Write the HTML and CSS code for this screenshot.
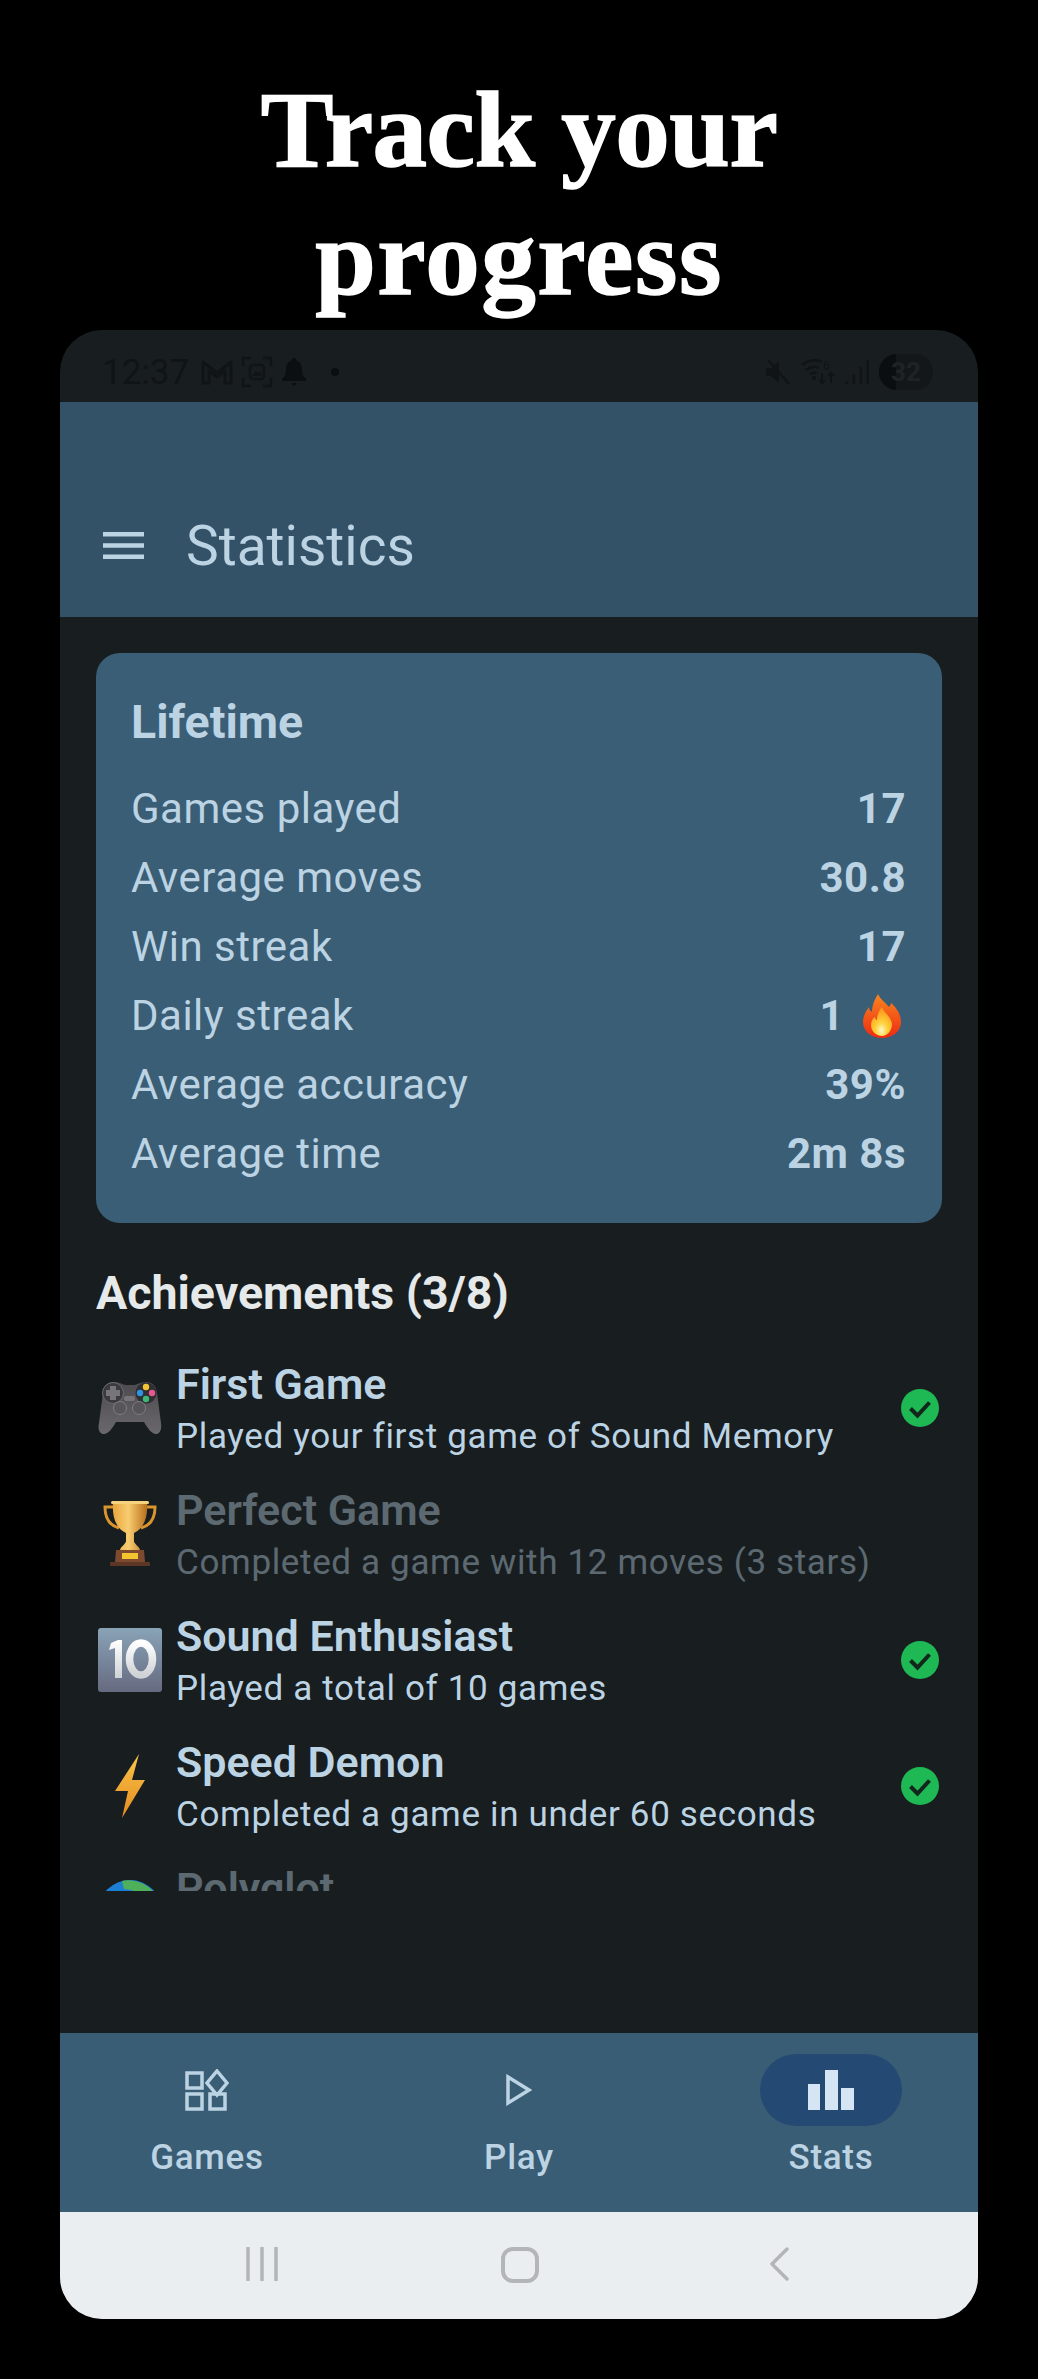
FILE: index.html
```html
<!DOCTYPE html>
<html lang="en">
<head>
  <meta charset="UTF-8">
  <meta name="viewport" content="width=device-width, initial-scale=1.0">
  <title>Track your progress</title>
  <link rel="stylesheet" href="styles.css">
</head>
<body>
  <h1 class="headline">Track your<br><span class="headline-second">progress</span></h1>

  <div class="phone">
    <div class="status-bar">
      <div class="status-left">
        <span class="clock">12:37</span>
        <svg class="status-icon" width="32" height="26" viewBox="0 0 32 26"><path d="M2 24V3l14 11L30 3v21h-6V12l-8 6-8-6v12z" fill="none" stroke="#101416" stroke-width="3" stroke-linejoin="round"/></svg>
        <svg class="status-icon" width="32" height="32" viewBox="0 0 32 32"><path d="M2 9V2h7M23 2h7v7M30 23v7h-7M9 30H2v-7" fill="none" stroke="#101416" stroke-width="2.5" stroke-linecap="round"/><rect x="9" y="9" width="14" height="14" rx="3" fill="none" stroke="#101416" stroke-width="2.5"/><path d="M11 20l4-5 2 2 2-2 2 5z" fill="#101416"/></svg>
        <svg class="status-icon" width="26" height="30" viewBox="0 0 26 30"><path d="M13 1c1.500 0 2.500 1 2.500 2.500C20 5 21 9 21 13c0 4 1 6 4 9v2H1v-2c3-3 4-5 4-9 0-4 1-8 5.500-9.500C10.500 2 11.500 1 13 1zM10 26h6l-3 3z" fill="#0b0f10"/></svg>
        <span class="status-dot"></span>
      </div>
      <div class="status-right">
        <svg width="26" height="26" viewBox="0 0 26 26"><path d="M1 9h5l8-7v22l-8-7H1z" fill="#101416"/><path d="M3 1l21 24" stroke="#101416" stroke-width="2.500"/></svg>
        <svg class="wifi" width="34" height="28" viewBox="0 0 34 28"><path d="M1 7c6-5 14-6 20-3M5 12c4-3 9-4 13-2M9 16c2-1 5-2 7-1" fill="none" stroke="#101416" stroke-width="2.500"/><circle cx="13" cy="20" r="2" fill="#101416"/><text x="22" y="12" class="wifi-six">6</text><path d="M21 15v10m-3-3l3 3 3-3M30 25V15m-3 3l3-3 3 3" fill="none" stroke="#101416" stroke-width="2"/></svg>
        <svg width="24" height="26" viewBox="0 0 24 26"><path d="M2 25v-3M9 25V15M16 25V8M23 25V1" stroke="#101416" stroke-width="2.500"/></svg>
        <div class="battery"><span class="battery-fill"></span><span class="battery-num">32</span></div>
      </div>
    </div>

    <header class="app-bar">
      <svg class="menu-icon" width="41" height="27" viewBox="0 0 41 27"><path d="M0 0h41v4.500H0zM0 11.250h41v4.500H0zM0 22.500h41V27H0z" fill="#bcd3e3"/></svg>
      <span class="app-title">Statistics</span>
    </header>

    <main class="content">
      <section class="card">
        <h2 class="card-title">Lifetime</h2>
        <div class="stat-row"><span>Games played</span><strong>17</strong></div>
        <div class="stat-row"><span>Average moves</span><strong>30.8</strong></div>
        <div class="stat-row"><span>Win streak</span><strong>17</strong></div>
        <div class="stat-row">
          <span>Daily streak</span>
          <strong class="streak">1
            <svg class="flame" width="40" height="44" viewBox="0 0 40 44">
              <defs>
                <linearGradient id="flameOuter" x1="0" y1="0" x2="0" y2="1"><stop offset="0" stop-color="#f9861e"/><stop offset="1" stop-color="#ee2a12"/></linearGradient>
                <radialGradient id="flameInner" cx="0.5" cy="0.8" r="0.7"><stop offset="0" stop-color="#fff7c8"/><stop offset="0.4" stop-color="#ffd23a"/><stop offset="1" stop-color="#fb9a1e"/></radialGradient>
              </defs>
              <path d="M16 0c2 5 7 8 11 13 1-1 2-3 2-4 6 5 10 12 10 19 0 9-8 16-19 16S1 37 1 28c0-6 3-11 6-15 0 2 1 4 3 5 0-7 3-13 6-18z" fill="url(#flameOuter)"/>
              <path d="M20 13c1 5 9 9 10 17 0 7-5 12-10 12S9 38 9 31c0-4 2-7 4-8 0 2 1 3 2 3 0-5 2-9 5-13z" fill="url(#flameInner)"/>
            </svg>
          </strong>
        </div>
        <div class="stat-row"><span>Average accuracy</span><strong>39%</strong></div>
        <div class="stat-row"><span>Average time</span><strong>2m 8s</strong></div>
      </section>

      <h2 class="section-title">Achievements (3/8)</h2>

      <div class="achievements">
        <div class="achievement">
          <div class="badge">
            <svg width="64" height="54" viewBox="0 0 64 54">
              <defs><linearGradient id="padBody" x1="0" y1="0" x2="0" y2="1"><stop offset="0" stop-color="#4b4a4e"/><stop offset="1" stop-color="#6b686c"/></linearGradient></defs>
              <path d="M16 1c6 0 9 3 12 3h8c3 0 6-3 12-3 7 0 10 4 11 11l4 30c1 8-2 11-5 11-4 0-8-5-12-12H18C14 48 10 53 6 53c-3 0-7-3-5-11l4-30C6 5 9 1 16 1z" fill="url(#padBody)"/>
              <circle cx="15" cy="12" r="10.500" fill="#3b3a3e" stroke="#6d6b70" stroke-width="1"/>
              <path d="M12 5h6v4h4v6h-4v4h-6v-4H8V9h4z" fill="#77757a"/>
              <circle cx="48" cy="12" r="10.500" fill="#2f2e32"/>
              <circle cx="48" cy="6" r="3.200" fill="#f6c432"/><circle cx="42" cy="12" r="3.200" fill="#2f93e0"/><circle cx="54" cy="12" r="3.200" fill="#e8578f"/><circle cx="48" cy="18" r="3.200" fill="#3cb878"/>
              <rect x="26" y="15" width="11" height="5" rx="2" fill="#77757a"/>
              <circle cx="22" cy="27" r="6.500" fill="#57555a" stroke="#7f7d82"/><circle cx="41" cy="27" r="6.500" fill="#57555a" stroke="#7f7d82"/>
            </svg>
          </div>
          <div class="achievement-text">
            <div class="achievement-name">First Game</div>
            <div class="achievement-desc">Played your first game of Sound Memory</div>
          </div>
          <svg class="check" width="38" height="38" viewBox="0 0 38 38"><circle cx="19" cy="19" r="19" fill="#1eb954"/><path d="M9.500 19.500l7 7 12-13" fill="none" stroke="#12261c" stroke-width="4"/></svg>
        </div>

        <div class="achievement locked">
          <div class="badge">
            <svg width="54" height="66" viewBox="0 0 54 66">
              <defs><linearGradient id="cupGold" x1="0" y1="0" x2="1" y2="0"><stop offset="0" stop-color="#e9a53c"/><stop offset="0.45" stop-color="#f8cd71"/><stop offset="1" stop-color="#b96f1b"/></linearGradient></defs>
              <path d="M12 6H2c0 10 3 18 14 21M42 6h10c0 10-3 18-14 21" fill="none" stroke="#d9942e" stroke-width="3"/>
              <path d="M10 1h34c1 14-2 26-13 31v8c0 3 5 5 6 9H17c1-4 6-6 6-9v-8C12 27 9 15 10 1z" fill="url(#cupGold)"/>
              <rect x="8" y="0" width="38" height="3" rx="1.500" fill="#f7d27d"/>
              <path d="M13 49h28l1 12H12z" fill="#7d4a30"/><rect x="19" y="52" width="16" height="6" fill="#f3c52f"/>
              <rect x="7" y="61" width="40" height="4" rx="1" fill="#5e3625"/>
            </svg>
          </div>
          <div class="achievement-text">
            <div class="achievement-name">Perfect Game</div>
            <div class="achievement-desc">Completed a game with 12 moves (3 stars)</div>
          </div>
        </div>

        <div class="achievement">
          <div class="badge">
            <svg width="64" height="64" viewBox="0 0 64 64">
              <defs>
                <linearGradient id="keycap" x1="0" y1="0" x2="0" y2="1"><stop offset="0" stop-color="#89a3b7"/><stop offset="1" stop-color="#666a80"/></linearGradient>
                <linearGradient id="keyNum" x1="0" y1="0" x2="0" y2="1"><stop offset="0" stop-color="#ffffff"/><stop offset="1" stop-color="#cfd2d6"/></linearGradient>
              </defs>
              <rect width="64" height="64" rx="3" fill="url(#keycap)"/>
              <path d="M13 15l7-3h4v38h-7V20l-6 2z" fill="url(#keyNum)"/>
              <ellipse cx="43" cy="31" rx="11.500" ry="16" fill="none" stroke="url(#keyNum)" stroke-width="7.500"/>
            </svg>
          </div>
          <div class="achievement-text">
            <div class="achievement-name">Sound Enthusiast</div>
            <div class="achievement-desc">Played a total of 10 games</div>
          </div>
          <svg class="check" width="38" height="38" viewBox="0 0 38 38"><circle cx="19" cy="19" r="19" fill="#1eb954"/><path d="M9.500 19.500l7 7 12-13" fill="none" stroke="#12261c" stroke-width="4"/></svg>
        </div>

        <div class="achievement">
          <div class="badge">
            <svg width="30" height="64" viewBox="0 0 30 64">
              <defs><linearGradient id="bolt" x1="0" y1="0" x2="0" y2="1"><stop offset="0" stop-color="#f9c64b"/><stop offset="1" stop-color="#e58a1f"/></linearGradient></defs>
              <path d="M24 0L17 26h13L7 64l6-27H0z" fill="url(#bolt)"/>
            </svg>
          </div>
          <div class="achievement-text">
            <div class="achievement-name">Speed Demon</div>
            <div class="achievement-desc">Completed a game in under 60 seconds</div>
          </div>
          <svg class="check" width="38" height="38" viewBox="0 0 38 38"><circle cx="19" cy="19" r="19" fill="#1eb954"/><path d="M9.500 19.500l7 7 12-13" fill="none" stroke="#12261c" stroke-width="4"/></svg>
        </div>

        <div class="achievement locked">
          <div class="badge">
            <svg width="64" height="64" viewBox="0 0 64 64">
              <circle cx="32" cy="32" r="32" fill="#1c7fd6"/>
              <path d="M24 1c8-2 20 0 30 9l2 6-12-3-6 1-4-4-8-1z" fill="#4fb05a"/>
            </svg>
          </div>
          <div class="achievement-text">
            <div class="achievement-name">Polyglot</div>
            <div class="achievement-desc">Played in another language</div>
          </div>
        </div>
      </div>
    </main>

    <nav class="bottom-nav">
      <div class="nav-item">
        <div class="nav-icon">
          <svg width="44" height="42" viewBox="0 0 44 42"><g fill="none" stroke="#bcd3e3" stroke-width="3.500"><rect x="2" y="4" width="15" height="15"/><rect x="2" y="25" width="15" height="15"/><rect x="25" y="25" width="15" height="15"/><path d="M32 2l10 12-10 12-10-12z"/></g></svg>
        </div>
        <span>Games</span>
      </div>
      <div class="nav-item">
        <div class="nav-icon">
          <svg width="26" height="32" viewBox="0 0 26 32"><path d="M2 3l21 13L2 29z" fill="none" stroke="#bcd3e3" stroke-width="3.500"/></svg>
        </div>
        <span>Play</span>
      </div>
      <div class="nav-item active">
        <div class="nav-icon">
          <svg width="46" height="40" viewBox="0 0 46 40"><path d="M0 14h12v26H0zM17 0h13v40H17zM33 18h13v22H33z" fill="#d6e5f4"/></svg>
        </div>
        <span>Stats</span>
      </div>
    </nav>

    <div class="system-bar">
      <svg width="32" height="34" viewBox="0 0 32 34"><path d="M2 1v32M16 1v32M30 1v32" stroke="#b3b5b7" stroke-width="3.500" stroke-linecap="round"/></svg>
      <svg class="home-btn" width="38" height="36" viewBox="0 0 38 36"><rect x="2" y="2" width="34" height="32" rx="10" fill="none" stroke="#b3b5b7" stroke-width="4"/></svg>
      <svg width="22" height="34" viewBox="0 0 22 34"><path d="M19 2L4 17l15 15" fill="none" stroke="#b3b5b7" stroke-width="3.500" stroke-linecap="round" stroke-linejoin="round"/></svg>
    </div>
  </div>
</body>
</html>
```

FILE: styles.css
```css
html,
body {
  height: 2379px;
  overflow: hidden;
}

body {
  margin: 0;
  background-color: #000;
  font-family: Roboto, "Liberation Sans", sans-serif;
}

h1,
h2 {
  margin: 0;
}

.headline {
  height: 330px;
  padding-top: 66px;
  box-sizing: border-box;
  color: #fff;
  font-family: "Liberation Serif", serif;
  font-size: 109px;
  font-weight: bold;
  line-height: 128px;
  letter-spacing: -0.5px;
  text-align: center;
  -webkit-text-stroke: 1.5px #fff;
}

.headline-second {
  letter-spacing: 1.5px;
}

.phone {
  width: 918px;
  height: 1989px;
  margin: 0 auto;
  display: flex;
  flex-direction: column;
  border-radius: 42px;
  overflow: hidden;
  background-color: #181d1f;
}

/* status bar, barely visible against the dark background */
.status-bar {
  height: 72px;
  flex-shrink: 0;
  box-sizing: border-box;
  display: flex;
  justify-content: space-between;
  align-items: center;
  padding: 12px 45px 0 42px;
  color: #101416;
}

.status-left,
.status-right {
  display: flex;
  align-items: center;
}

.status-left {
  gap: 8px;
}

.status-right {
  gap: 10px;
}

.clock {
  font-size: 35px;
  margin-right: 4px;
}

.status-dot {
  width: 8px;
  height: 8px;
  margin-left: 16px;
  border-radius: 50%;
  background-color: #0b0f10;
}

.wifi-six {
  font-family: Roboto, sans-serif;
  font-size: 12px;
  fill: #101416;
}

.battery {
  position: relative;
  width: 54px;
  height: 36px;
  border-radius: 18px;
  overflow: hidden;
  background-color: #131719;
}

.battery-fill {
  position: absolute;
  top: 0;
  left: 0;
  bottom: 0;
  width: 17px;
  background-color: #0b0e10;
}

.battery-num {
  position: absolute;
  inset: 0;
  font-size: 26px;
  font-weight: bold;
  line-height: 36px;
  text-align: center;
  color: #1f2325;
}

.app-bar {
  height: 215px;
  flex-shrink: 0;
  box-sizing: border-box;
  display: flex;
  align-items: center;
  padding: 72px 42px 0 43px;
  background-color: #335268;
}

.menu-icon {
  margin-right: 42px;
}

.app-title {
  font-size: 55px;
  color: #bcd3e3;
}

.content {
  flex: 1;
  min-height: 0;
  padding: 36px 36px 0;
  overflow: hidden;
}

.card {
  height: 570px;
  box-sizing: border-box;
  padding: 41px 36px 0 35px;
  border-radius: 24px;
  background-color: #3a5e75;
  color: #bcd3e3;
}

.card-title {
  margin-bottom: 24px;
  font-size: 46.500px;
  font-weight: 700;
  line-height: 56px;
}

.stat-row {
  height: 69px;
  display: flex;
  justify-content: space-between;
  align-items: center;
  font-size: 42px;
  letter-spacing: 0.5px;
}

.stat-row strong {
  font-weight: 700;
}

.streak {
  display: flex;
  align-items: center;
  gap: 18px;
}

.flame {
  margin-right: 4px;
}

.section-title {
  margin-top: 44px;
  font-size: 46.500px;
  font-weight: 700;
  line-height: 52px;
  color: #e6e9ea;
}

/* list is a scroller in the app, so the fifth row is cut off */
.achievements {
  height: 546px;
  margin-top: 26px;
  overflow: hidden;
}

.achievement {
  height: 126px;
  display: flex;
  align-items: center;
  color: #bcd3e3;
}

.achievement.locked .achievement-text {
  opacity: 0.42;
}

.badge {
  width: 64px;
  margin: 0 14px 0 2px;
  flex-shrink: 0;
  display: flex;
  justify-content: center;
  align-items: center;
}

.achievement-text {
  flex: 1;
  min-width: 0;
  padding-top: 5px;
}

.achievement-name {
  font-size: 43px;
  font-weight: 600;
  line-height: 52px;
}

.achievement-desc {
  font-size: 35px;
  line-height: 54px;
  letter-spacing: 0.65px;
  white-space: nowrap;
}

.check {
  margin-right: 3px;
}

.bottom-nav {
  height: 179px;
  flex-shrink: 0;
  display: grid;
  grid-template-columns: repeat(3, 284px);
  justify-content: center;
  gap: 28px;
  padding-top: 21px;
  box-sizing: border-box;
  background-color: #395d74;
  color: #bcd3e3;
  font-size: 35px;
  font-weight: 500;
  letter-spacing: 0.7px;
}

.nav-item {
  display: flex;
  flex-direction: column;
  align-items: center;
  gap: 11px;
}

.nav-icon {
  width: 142px;
  height: 72px;
  display: flex;
  justify-content: center;
  align-items: center;
  border-radius: 36px;
}

.nav-item.active .nav-icon {
  background-color: #244a73;
}

.system-bar {
  height: 107px;
  flex-shrink: 0;
  display: flex;
  justify-content: center;
  align-items: flex-start;
  gap: 226px;
  padding: 35px 2px 0 0;
  box-sizing: border-box;
  background-color: #eaeef1;
}

.home-btn {
  margin: 0 3px 0 -3px;
}
```
